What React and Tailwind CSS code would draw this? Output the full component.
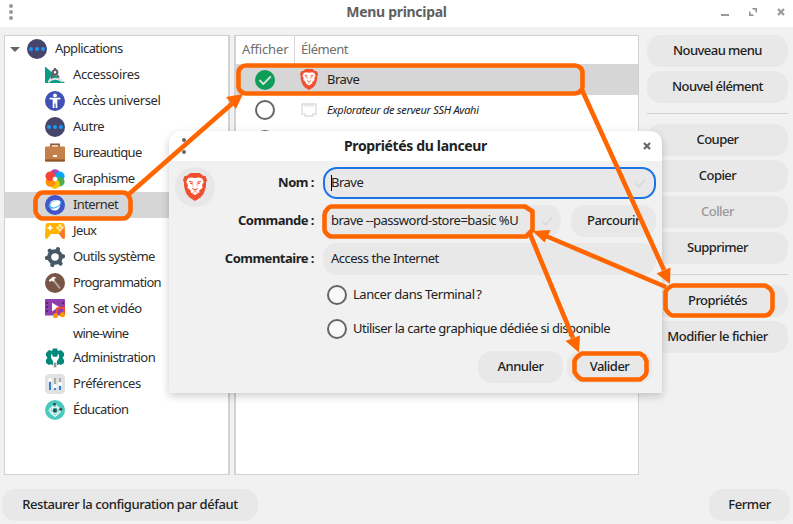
import clsx from 'clsx';

function DotsIcon() {
  return (
    <svg viewBox="0 0 20 20" className="size-5">
      <circle cx="10" cy="10" r="10" fill="#45466a" />
      <circle cx="4" cy="10" r="2" fill="#2196f3" />
      <circle cx="10" cy="10" r="2" fill="#2196f3" />
      <circle cx="16" cy="10" r="2" fill="#2196f3" />
    </svg>
  );
}

function AccessoriesIcon() {
  return (
    <svg viewBox="0 0 20 20" className="size-5">
      <path d="M0 1.5L20 18H0Z" fill="#0d9a86" />
      <path d="M3.5 16.5Q10 11 17.5 16.5M6.5 12L3.5 17.5M13 11L17.5 17" stroke="#dfe3e3" strokeWidth="1.8" fill="none" />
      <circle cx="10" cy="7.3" r="2.3" stroke="#616161" strokeWidth="2.2" fill="#fff" />
      <path d="M10 3V5M8 10L6 13.5M12 10L14 12.5" stroke="#616161" strokeWidth="2" />
    </svg>
  );
}

function UniversalIcon() {
  return (
    <svg viewBox="0 0 20 20" className="size-5">
      <circle cx="10" cy="10" r="10" fill="#3f51b5" />
      <circle cx="10" cy="4.4" r="1.9" fill="#fff" />
      <path d="M4.6 6.8H15.4V8.6H12.3V17H10.6V12.5H9.4V17H7.7V8.6H4.6Z" fill="#fff" />
    </svg>
  );
}

function OfficeIcon() {
  return (
    <svg viewBox="0 0 20 20" className="size-5">
      <path d="M6 5V1.4H14V5" stroke="#945b32" strokeWidth="1.8" fill="none" />
      <rect x="0" y="3.5" width="20" height="15" rx="1" fill="#c58049" />
      <path d="M0 16.5H20V17.5Q20 18.5 19 18.5H1Q0 18.5 0 17.5Z" fill="#8e552d" />
      <rect x="8" y="12" width="4" height="2" rx=".5" fill="#fff" />
    </svg>
  );
}

function GraphicsIcon() {
  return (
    <svg viewBox="0 0 20 20" className="size-5">
      <circle cx="10" cy="5" r="4.8" fill="#ab47bc" />
      <circle cx="14.8" cy="7.3" r="4.8" fill="#03a9f4" />
      <circle cx="14.8" cy="12.7" r="4.8" fill="#4caf50" />
      <circle cx="10" cy="15.2" r="4.8" fill="#ffc107" />
      <circle cx="5.4" cy="13" r="4.8" fill="#ff8f00" />
      <circle cx="5.3" cy="7.2" r="4.8" fill="#f44336" />
      <path d="M10 7.5L12.3 8.7V11.3L10 12.5L7.7 11.3V8.7Z" fill="#fff" />
    </svg>
  );
}

function InternetIcon() {
  return (
    <svg viewBox="0 0 20 20" className="size-5">
      <circle cx="10" cy="10" r="10" fill="#4154c8" />
      <circle cx="9.7" cy="10.3" r="5.3" fill="#fff" />
      <ellipse cx="10" cy="9.3" rx="6.8" ry="3.7" transform="rotate(-24 10 9.3)" fill="#46b4f5" />
      <ellipse cx="10.3" cy="8.9" rx="5" ry="2.9" transform="rotate(-24 10.3 8.9)" fill="#fff" />
    </svg>
  );
}

function GamesIcon() {
  return (
    <svg viewBox="0 0 20 20" className="size-5">
      <path d="M3 2H17Q19 2 19.4 4L20 15.5Q20 18 18 18L14 13H6L2 18Q0 18 0 15.5L.6 4Q1 2 3 2Z" fill="#ffb300" />
      <path d="M14 13L18 18Q20 18 20 15.5L19.5 5Z" fill="#f4792f" />
      <path d="M5 4.3V9.3M2.5 6.8H7.5" stroke="#fff" strokeWidth="1.8" />
      <g fill="none" stroke="#fff" strokeWidth=".9">
        <circle cx="15" cy="4.5" r="1" />
        <circle cx="15" cy="9" r="1" />
        <circle cx="12.8" cy="6.8" r="1" />
        <circle cx="17.2" cy="6.8" r="1" />
      </g>
    </svg>
  );
}

function SystemIcon() {
  return (
    <svg viewBox="0 0 20 20" className="size-5">
      <circle cx="10" cy="10" r="5.8" fill="none" stroke="#455a64" strokeWidth="4" />
      <path
        d="M12.3 4L13 2.200M16 9.500L18 9.300M14 14.500L15.500 16.500M7.800 16L7.300 18M4 10.800L2 11M6.300 5.300L4.800 3.800"
        stroke="#455a64"
        strokeWidth="4.200"
        strokeLinecap="round"
      />
    </svg>
  );
}

function DevIcon() {
  return (
    <svg viewBox="0 0 20 20" className="size-5">
      <circle cx="10" cy="10" r="10" fill="#795548" />
      <path d="M8 6.5L15 15.5" stroke="#bcaaa4" strokeWidth="1.9" />
      <path d="M3.8 7.2L8 3.8L11.5 4.5L9.3 6L9.5 7.5L7.8 8.8L6.8 7.4L5 9Z" fill="#fff" />
    </svg>
  );
}

function MediaIcon() {
  return (
    <svg viewBox="0 0 20 20" className="size-5">
      <rect y="0" width="20" height="16.5" rx=".6" fill="#8e3fae" />
      <path d="M2 3V15M18 3V9" stroke="#5c2377" strokeWidth="2" strokeDasharray="2 2" />
      <path d="M7 3.8V12.2L14 8Z" fill="#fff" />
      <path d="M11.8 17V9.5L19 8.1V16" fill="none" stroke="#ff4b2b" strokeWidth="1.8" />
      <circle cx="10.5" cy="16.7" r="2.5" fill="#ff9800" />
      <circle cx="17.4" cy="15.7" r="2.5" fill="#ff9800" />
    </svg>
  );
}

function AdminIcon() {
  return (
    <svg viewBox="0 0 20 20" className="size-5">
      <path d="M8 .5H12L13 3L16 2L19 5V8L17.5 9.5L19 12V15L16 17L13.5 16V17H6.5V16L4 17L1 15V12L2.5 9.5L1 8V5L4 2L7 3Z" fill="#00897b" />
      <path d="M6.8 5.5Q4.8 9 7.3 12Q8.3 13 8.3 15H11.7Q11.7 13 12.7 12Q15.2 9 13.2 5.5L12 8.7H8Z" fill="#fff" />
      <rect x="7.8" y="14" width="4.4" height="6" rx="1.8" fill="#dcdcdc" />
      <rect x="9.2" y="15" width="1.6" height="4" fill="#858585" />
    </svg>
  );
}

function PrefsIcon() {
  return (
    <svg viewBox="0 0 20 20" className="size-5">
      <rect width="20" height="20" rx="4.5" fill="#e1e1e1" />
      <path d="M10 4V10M15 4V9" stroke="#aaa" strokeWidth="2" />
      <path d="M5 7V16M10 13V16M15 11V16" stroke="#2f80e0" strokeWidth="2" />
      <g fill="#fff">
        <circle cx="5" cy="6" r="2" />
        <circle cx="10" cy="12.3" r="2" />
        <circle cx="15" cy="10" r="2" />
      </g>
    </svg>
  );
}

function EducationIcon() {
  return (
    <svg viewBox="0 0 20 20" className="size-5">
      <circle cx="10" cy="10" r="10" fill="#4cc9be" />
      <g fill="none" stroke="#fff" strokeWidth=".9">
        <ellipse cx="10" cy="10.5" rx="6" ry="3" />
        <ellipse cx="10" cy="10.5" rx="3" ry="6" />
        <circle cx="10" cy="10.5" r="4.9" />
      </g>
      <circle cx="10" cy="10.5" r="2" fill="#37474f" />
      <circle cx="9.5" cy="4.3" r="1.5" fill="#37474f" />
      <circle cx="15.7" cy="9.3" r="1.5" fill="#37474f" />
    </svg>
  );
}

function BraveIcon({ className }) {
  return (
    <svg viewBox="0 0 24 28" className={className}>
      <path d="M6 1Q7 0 8 0H16Q17 0 18 1L20 2.8L22.5 3L24 7L23 9.5Q23.5 12 22 17Q21 21.5 17.5 24.5L12 28L6.5 24.5Q3 21.5 2 17Q.5 12 1 9.5L0 7L1.5 3L4 2.8Z" fill="#f15030" />
      <path d="M8 4.4L12 5L16 4.4L19 5.3L20.8 9L19 12.3L19.6 14.8L16.2 17.5L16.4 19.3L12 22L7.6 19.3L7.8 17.5L4.4 14.8L5 12.3L3.2 9L5 5.3Z" fill="#fff" />
      <path d="M6 8.2L10 9.2M18 8.200L14 9.200M7.200 10.200L9.500 10.900M16.800 10.200L14.500 10.900M9.400 15.400L12 17L14.600 15.400" fill="none" stroke="#f15030" strokeWidth="1.1" />
      <path d="M12 17V18.6M9.500 19.600L12 18.500L14.500 19.600M10.300 10.500L9.800 13.500M13.700 10.500L14.200 13.500" fill="none" stroke="#f5937d" strokeWidth=".8" />
    </svg>
  );
}

function CloseIcon({ className }) {
  return (
    <svg viewBox="0 0 8 8" className={className}>
      <path d="M1 1L7 7M7 1L1 7" stroke="currentColor" strokeWidth="2.2" />
    </svg>
  );
}

const categories = [
  { label: 'Accessoires', Icon: AccessoriesIcon, tracking: 'tracking-[-0.35px]' },
  { label: 'Accès universel', Icon: UniversalIcon, tracking: 'tracking-[-0.4px]' },
  { label: 'Autre', Icon: DotsIcon, tracking: 'tracking-[-0.45px]' },
  { label: 'Bureautique', Icon: OfficeIcon, tracking: 'tracking-[-0.63px]' },
  { label: 'Graphisme', Icon: GraphicsIcon, tracking: 'tracking-[-0.6px]' },
  { label: 'Internet', Icon: InternetIcon, tracking: 'tracking-[-0.6px]', selected: true },
  { label: 'Jeux', Icon: GamesIcon, tracking: 'tracking-[-0.6px]' },
  { label: 'Outils système', Icon: SystemIcon, tracking: 'tracking-[-0.57px]' },
  { label: 'Programmation', Icon: DevIcon, tracking: 'tracking-[-0.68px]' },
  { label: 'Son et vidéo', Icon: MediaIcon, tracking: 'tracking-[-0.53px]' },
  { label: 'wine-wine', tracking: 'tracking-[-0.75px]', short: true },
  { label: 'Administration', Icon: AdminIcon, tracking: 'tracking-[-0.6px]' },
  { label: 'Préférences', Icon: PrefsIcon, tracking: 'tracking-[-0.42px]' },
  { label: 'Éducation', Icon: EducationIcon, tracking: 'tracking-[-0.6px]' },
];

function Button({ children, className }) {
  return (
    <button
      type="button"
      className={clsx(
        'flex h-8 shrink-0 items-center justify-center rounded-[14px] bg-[#e8e8e8] pb-0.5 font-medium whitespace-nowrap',
        className,
      )}
    >
      {children}
    </button>
  );
}

function Radio() {
  return <span className="size-5 shrink-0 rounded-full border-2 border-[#666] bg-white/60" />;
}

function TitleBar() {
  return (
    <header className="relative flex h-[27px] shrink-0 items-center justify-between bg-white pr-2 pl-[9px] text-[#999]">
      <div className="flex flex-col gap-0.5 pb-[3px]">
        <i className="size-1 rounded-full bg-[#999]" />
        <i className="size-1 rounded-full bg-[#999]" />
        <i className="size-1 rounded-full bg-[#999]" />
      </div>
      <h1 className="absolute inset-x-0 top-0.5 text-center text-[14px] leading-5 font-bold tracking-[-0.3px] text-[#5f5f5f]">
        Menu principal
      </h1>
      <div className="flex items-center gap-5 pb-[3px]">
        <span className="h-0.5 w-2 self-end bg-[#999]" />
        <svg viewBox="0 0 8 8" className="size-2" fill="currentColor">
          <path d="M3 0H8V5L6.300 3.800V1.800H4.200ZM0 3L1.700 4.200V6.200H3.800L5 8H0Z" />
        </svg>
        <CloseIcon className="size-2" />
      </div>
    </header>
  );
}

function Sidebar() {
  return (
    <nav className="w-[226px] border border-r-2 border-[#d2d2d2] bg-white text-[#2d2d2d]">
      <div className="flex h-[26px] items-center pl-[5px]">
        <svg viewBox="0 0 10 5" className="mr-[7px] h-[5px] w-[10px]">
          <path d="M0 0H10L5 5Z" fill="#666" />
        </svg>
        <DotsIcon />
        <span className="ml-2 pb-0.5 tracking-[-0.6px]">Applications</span>
      </div>
      {categories.map(({ label, Icon, tracking, selected, short }) => (
        <div key={label} className={clsx('flex items-center gap-2 pl-10', short ? 'h-[23px]' : 'h-[26px]', selected && 'bg-[#d6d6d6]')}>
          {Icon ? <Icon /> : <span className="w-5" />}
          <span className={clsx('pb-0.5', tracking)}>{label}</span>
        </div>
      ))}
    </nav>
  );
}

function ItemTable() {
  return (
    <section className="ml-1 w-[405px] border border-l-2 border-[#d2d2d2] bg-white">
      <div className="flex h-7 text-[#6d6d6d]">
        <div className="w-[59px] border-r border-[#d8d8d8] pt-1 pl-1.5 tracking-[-0.15px]">Afficher</div>
        <div className="pt-1 pl-1.5 tracking-[-0.45px]">Élément</div>
      </div>
      <div className="flex h-[31px] items-center bg-[#d6d6d6] pl-[19px]">
        <svg viewBox="0 0 20 20" className="size-5">
          <circle cx="10" cy="10" r="10" fill="#0f9d58" />
          <path d="M4.5 10.2L8.4 14L15.8 6.3" stroke="#e8e8e8" strokeWidth="1.8" fill="none" />
        </svg>
        <BraveIcon className="ml-[25px] h-[21px] w-[18px]" />
        <span className="ml-[9px] pb-0.5 tracking-[-0.5px] text-[#222]">Brave</span>
      </div>
      <div className="flex h-[30px] items-center pl-[19px]">
        <Radio />
        <svg viewBox="0 0 16 14" className="ml-[26px] h-3.5 w-4">
          <path d="M1 1H15V11H12V13H4V11H1Z" fill="none" stroke="#ddd" strokeWidth="1.4" />
          <path d="M4 1V4M6 1V4M8 1V4M10 1V4M12 1V4" stroke="#ddd" />
        </svg>
        <span className="ml-[10px] text-[11px] tracking-[-0.3px] text-[#222] italic">Explorateur de serveur SSH Avahi</span>
      </div>
      <div className="flex h-[30px] items-center pl-[19px]">
        <Radio />
      </div>
    </section>
  );
}

function Actions() {
  return (
    <aside className="ml-2 flex w-[141px] flex-col gap-1 tracking-[-0.55px]">
      <Button>Nouveau menu</Button>
      <Button>Nouvel élément</Button>
      <hr className="mt-1.5 mb-1.5 border-[#d0d0d0]" />
      <Button>Couper</Button>
      <Button>Copier</Button>
      <Button className="text-[#999]">Coller</Button>
      <Button>Supprimer</Button>
      <hr className="mt-1.5 mb-1.5 border-[#d0d0d0]" />
      <Button>Propriétés</Button>
      <Button className="tracking-[-0.47px]">Modifier le fichier</Button>
    </aside>
  );
}

function FieldLabel({ children }) {
  return <label className="w-[145px] shrink-0 pb-0.5 text-right font-bold">{children}</label>;
}

function FaintCheck() {
  return (
    <svg viewBox="0 0 12 10" className="h-2.5 w-3">
      <path d="M.7 5L4.5 8.7L11.5 1" fill="none" stroke="#d9d9d9" strokeWidth="1.6" />
    </svg>
  );
}

function LauncherDialog() {
  return (
    <div
      role="dialog"
      className="absolute top-[131px] left-[169px] h-[262px] w-[493px] rounded-t-xl bg-[#f1f1f1] tracking-[-0.5px] text-[#222] shadow-[0_3px_8px_rgba(0,0,0,0.2)]"
    >
      <div className="relative flex h-[30px] items-center justify-between rounded-t-xl bg-white pr-[11px] pl-[13px]">
        <div className="flex flex-col gap-2">
          <i className="size-1 rounded-full bg-[#666]" />
          <i className="size-1 rounded-full bg-[#666]" />
        </div>
        <h2 className="absolute inset-x-0 top-[5px] text-center text-[14px] leading-5 font-bold tracking-[-0.35px]">
          Propriétés du lanceur
        </h2>
        <CloseIcon className="size-2 text-[#666]" />
      </div>
      <div className="flex pt-1.5 pl-1.5">
        <div className="flex size-10 items-center justify-center rounded-full bg-[#e7e7e7]">
          <BraveIcon className="h-7 w-6" />
        </div>
        <div className="-ml-[46px] flex flex-col gap-1.5">
          <div className="flex items-center">
            <FieldLabel>Nom :</FieldLabel>
            <div className="ml-[9px] flex h-8 w-[333px] items-center justify-between rounded-[14px] border-2 border-[#1a73e8] bg-[#e8e8e8] pr-2 pl-1.5">
              <span className="flex items-center">
                <i className="h-4 w-px bg-black" />
                <span className="-ml-px pb-0.5">Brave</span>
              </span>
              <FaintCheck />
            </div>
          </div>
          <div className="flex items-center">
            <FieldLabel>Commande :</FieldLabel>
            <div className="ml-[9px] flex h-8 w-[238px] items-center justify-between rounded-[14px] bg-[#e8e8e8] pr-2 pl-2">
              <span className="pb-0.5">brave --password-store=basic %U</span>
              <FaintCheck />
            </div>
            <Button className="ml-2.5 w-[85px]">Parcourir</Button>
          </div>
          <div className="flex items-center">
            <FieldLabel>Commentaire :</FieldLabel>
            <div className="ml-[9px] flex h-8 w-[333px] items-center rounded-[14px] bg-[#e8e8e8] pl-2">
              <span className="pb-0.5">Access the Internet</span>
            </div>
          </div>
        </div>
      </div>
      <div className="mt-2.5 flex flex-col gap-3.5 pl-[158px]">
        <div className="flex h-5 items-center gap-1.5">
          <Radio />
          <span className="pb-0.5 tracking-[-0.45px]">Lancer dans Terminal&#8239;?</span>
        </div>
        <div className="flex h-5 items-center gap-1.5">
          <Radio />
          <span className="pb-0.5 tracking-[-0.53px]">Utiliser la carte graphique dédiée si disponible</span>
        </div>
      </div>
      <div className="mt-3 flex justify-end gap-1 pr-2.5">
        <Button className="w-[85px]">Annuler</Button>
        <Button className="w-[85px]">Valider</Button>
      </div>
    </div>
  );
}

// Hand-drawn highlights and the arrows that chain the steps together
function Annotations() {
  return (
    <svg viewBox="0 0 793 524" className="pointer-events-none absolute inset-0 h-[524px] w-[793px]">
      <g fill="none" stroke="#ff6600" strokeWidth="4.6" strokeLinejoin="round">
        <path d="M43 192.5H123Q126 192.5 128 195Q130.5 198 130.5 201V211Q130.5 213 128 216Q126 218.5 123 218.5H43Q40 218.5 38 216Q35.5 213 35.5 211V201Q35.5 198 38 195Q40 192.5 43 192.5Z" />
        <path d="M246 65.5H575Q578 65.5 580 67.5Q582.5 69 582.5 73V87Q582.5 89 580 91.5Q578 93.5 575 93.5H246Q243 93.5 241 91.5Q238.5 89 238.5 87V73Q238.5 69 241 67.5Q243 65.5 246 65.5Z" />
        <path d="M332 206.5H525L532.5 211.5V230L526 236.5H332Q329 236.5 327 234Q324.5 232 324.5 229V215Q324.5 212 327 209.5Q329 206.5 332 206.5Z" />
        <path d="M673 285.5H765Q768 287 770 288.5L772.5 293V308Q772.5 310 770 313Q768 315.5 765 315.5H673Q670 315.5 665.5 309V292Q667 288 673 285.5Z" />
        <path d="M582 353.5H640Q642 355 644 356L646.5 361V372Q646 376 640 379.5H582Q578 378 574.5 372V361Q576 357 582 353.5Z" />
        <path d="M129 194L234 102M582 90L664 270M666 287L546 236M530 234L573 338" />
      </g>
      <g fill="#ff6600">
        <path d="M243 94L226 97L236 109Z" />
        <path d="M670 284L656.5 273.5L670.5 267.5Z" />
        <path d="M532.5 231L550.5 230L544.5 242.5Z" />
        <path d="M579 352.5L565.5 341L580 335.5Z" />
      </g>
    </svg>
  );
}

export default function App() {
  return (
    <div className="relative flex h-[524px] w-[793px] flex-col overflow-hidden bg-[#f1f1f1] font-['Noto_Sans',sans-serif] text-[13px] leading-[18px] text-[#222]">
      <TitleBar />
      <main className="mt-2 ml-1 flex h-[440px] shrink-0">
        <Sidebar />
        <ItemTable />
        <Actions />
      </main>
      <footer className="mt-3.5 flex justify-between pr-[3px] pl-0.5 tracking-[-0.42px]">
        <Button className="w-64">Restaurer la configuration par défaut</Button>
        <Button className="w-[81px]">Fermer</Button>
      </footer>
      <LauncherDialog />
      <Annotations />
    </div>
  );
}
